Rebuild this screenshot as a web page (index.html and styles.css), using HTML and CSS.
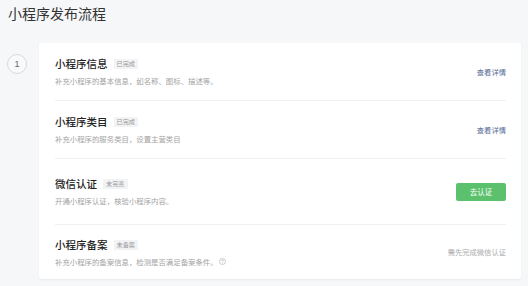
FILE: index.html
```html
<!DOCTYPE html>
<html lang="zh-CN">
<head>
    <meta charset="UTF-8">
    <title>小程序发布流程</title>
    <link rel="stylesheet" href="styles.css">
</head>
<body>
    <div class="page">
        <h1 class="page-title">小程序发布流程</h1>
        <div class="step">
            <div class="step-num">1</div>
            <div class="card">
                <div class="item">
                    <div class="item-main">
                        <div class="item-title">小程序信息<span class="tag">已完成</span></div>
                        <div class="item-desc">补充小程序的基本信息，如名称、图标、描述等。</div>
                    </div>
                    <a class="item-link" href="#">查看详情</a>
                </div>
                <div class="item">
                    <div class="item-main">
                        <div class="item-title">小程序类目<span class="tag">已完成</span></div>
                        <div class="item-desc">补充小程序的服务类目，设置主营类目</div>
                    </div>
                    <a class="item-link" href="#">查看详情</a>
                </div>
                <div class="item item-tall">
                    <div class="item-main">
                        <div class="item-title">微信认证<span class="tag">未完善</span></div>
                        <div class="item-desc">开通小程序认证，核验小程序内容。</div>
                    </div>
                    <button class="btn-primary">去认证</button>
                </div>
                <div class="item item-last">
                    <div class="item-main">
                        <div class="item-title">小程序备案<span class="tag">未备案</span></div>
                        <div class="item-desc">补充小程序的备案信息，检测是否满足备案条件。<svg class="help" viewBox="0 0 12 12" width="7" height="7"><circle cx="6" cy="6" r="5.2" fill="none" stroke="#a8a8a8" stroke-width="1"/><path d="M4.4 4.7a1.6 1.6 0 1 1 2.3 1.4c-.5.3-.7.6-.7 1.1v.4" fill="none" stroke="#a8a8a8" stroke-width="1"/><circle cx="6" cy="9" r=".6" fill="#a8a8a8"/></svg></div>
                    </div>
                    <span class="item-note">需先完成微信认证</span>
                </div>
            </div>
        </div>
    </div>
</body>
</html>
```

FILE: styles.css
```css
html, body {
    margin: 0;
    padding: 0;
    height: 100%;
    background: #f6f7f9;
}
body {
    font-family: "Noto Sans CJK SC", "Noto Sans", sans-serif;
    color: #333;
    overflow: hidden;
}
.page {
    padding: 4px 7px 0 8px;
}
.page-title {
    margin: 0;
    font-size: 14px;
    line-height: 18px;
    font-weight: normal;
    color: #333;
}
/* Step row with number and card */
.step {
    display: flex;
    align-items: flex-start;
    margin-top: 21px;
}
.step-num {
    width: 18px;
    height: 18px;
    margin: 11px 0 0 -1px;
    border: 1px solid #d9d9d9;
    border-radius: 50%;
    background: #f9fafb;
    color: #666;
    font-family: "Liberation Sans", sans-serif;
    font-size: 9px;
    line-height: 18px;
    text-align: center;
}
.card {
    flex: 1;
    margin-left: 12px;
    padding: 0 15px 0 16px;
    background: #fff;
    border-radius: 2px;
    box-shadow: 0 1px 2px rgba(0, 0, 0, 0.06);
}
.item {
    display: flex;
    align-items: center;
    justify-content: space-between;
    height: 57px;
    border-bottom: 1px solid #f0f0f0;
}
.item-tall {
    height: 65px;
}
.item-last {
    height: 54px;
    border-bottom: none;
}
.item-title {
    display: flex;
    align-items: center;
    font-size: 10.5px;
    line-height: 14px;
    font-weight: 500;
    color: #222;
}
.tag {
    margin-left: 6px;
    padding: 0 3px;
    background: #f2f3f5;
    color: #999;
    font-size: 6.2px;
    line-height: 10px;
    font-weight: normal;
}
.item-desc {
    display: flex;
    align-items: center;
    margin-top: 4px;
    font-size: 7.4px;
    line-height: 11px;
    color: #a3a3a3;
}
.help {
    margin-left: 1px;
}
.item-link {
    font-size: 7.3px;
    color: #576b95;
    text-decoration: none;
}
.btn-primary {
    width: 50px;
    height: 18px;
    padding: 0;
    border: none;
    border-radius: 2px;
    background: #5cc16c;
    color: #fff;
    font-family: inherit;
    font-size: 7.5px;
    cursor: pointer;
}
.item-note {
    font-size: 7.3px;
    color: #ababab;
}
```
